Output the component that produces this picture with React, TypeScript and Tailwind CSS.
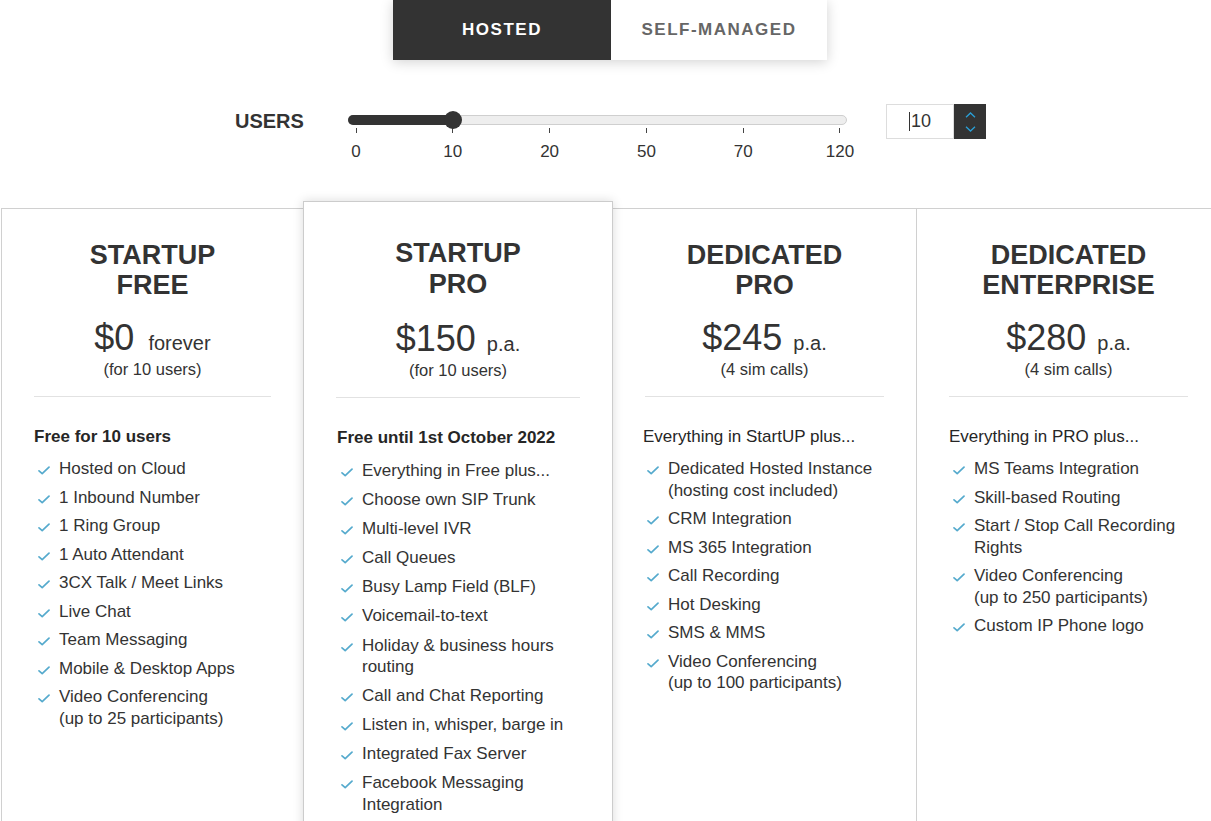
import React, { useState } from "react";

type Plan = {
  title: [string, string];
  price: string;
  unit: string;
  sub: string;
  heading: string;
  headingBold: boolean;
  features: string[][];
};

const plans: Plan[] = [
  {
    title: ["STARTUP", "FREE"],
    price: "$0",
    unit: "forever",
    sub: "(for 10 users)",
    heading: "Free for 10 users",
    headingBold: true,
    features: [
      ["Hosted on Cloud"],
      ["1 Inbound Number"],
      ["1 Ring Group"],
      ["1 Auto Attendant"],
      ["3CX Talk / Meet Links"],
      ["Live Chat"],
      ["Team Messaging"],
      ["Mobile & Desktop Apps"],
      ["Video Conferencing", "(up to 25 participants)"],
    ],
  },
  {
    title: ["STARTUP", "PRO"],
    price: "$150",
    unit: "p.a.",
    sub: "(for 10 users)",
    heading: "Free until 1st October 2022",
    headingBold: true,
    features: [
      ["Everything in Free plus..."],
      ["Choose own SIP Trunk"],
      ["Multi-level IVR"],
      ["Call Queues"],
      ["Busy Lamp Field (BLF)"],
      ["Voicemail-to-text"],
      ["Holiday & business hours", "routing"],
      ["Call and Chat Reporting"],
      ["Listen in, whisper, barge in"],
      ["Integrated Fax Server"],
      ["Facebook Messaging", "Integration"],
    ],
  },
  {
    title: ["DEDICATED", "PRO"],
    price: "$245",
    unit: "p.a.",
    sub: "(4 sim calls)",
    heading: "Everything in StartUP plus...",
    headingBold: false,
    features: [
      ["Dedicated Hosted Instance", "(hosting cost included)"],
      ["CRM Integration"],
      ["MS 365 Integration"],
      ["Call Recording"],
      ["Hot Desking"],
      ["SMS & MMS"],
      ["Video Conferencing", "(up to 100 participants)"],
    ],
  },
  {
    title: ["DEDICATED", "ENTERPRISE"],
    price: "$280",
    unit: "p.a.",
    sub: "(4 sim calls)",
    heading: "Everything in PRO plus...",
    headingBold: false,
    features: [
      ["MS Teams Integration"],
      ["Skill-based Routing"],
      ["Start / Stop Call Recording", "Rights"],
      ["Video Conferencing", "(up to 250 participants)"],
      ["Custom IP Phone logo"],
    ],
  },
];

const ticks = ["0", "10", "20", "50", "70", "120"];

function CheckMark() {
  return (
    <svg
      width="12"
      height="9"
      viewBox="0 0 12 9"
      className="mt-[8px] shrink-0"
      fill="none"
    >
      <path
        d="M1 4.8 L4.2 7.6 L11 1.2"
        stroke="#55aacd"
        strokeWidth="1.7"
        strokeLinecap="round"
        strokeLinejoin="round"
      />
    </svg>
  );
}

function PlanCard({
  plan,
  featured,
  pad = "px-[32px]",
}: {
  plan: Plan;
  featured?: boolean;
  pad?: string;
}) {
  return (
    <div className={featured ? "pt-[36px]" : "pt-[31px]"}>
      <h3
        className={`text-center text-[27px] font-bold text-[#333] ${
          featured ? "leading-[31px]" : "leading-[30px]"
        }`}
      >
        {plan.title[0]}
        <br />
        {plan.title[1]}
      </h3>
      <div
        className={`text-center leading-[40px] text-[#333] ${
          featured ? "mt-[19px]" : "mt-[18px]"
        }`}
      >
        <span className="text-[36px]">{plan.price}</span>
        <span className={`text-[20px] ${plan.unit === "forever" ? "ml-[14px]" : "ml-[11px]"}`}>
          {plan.unit}
        </span>
      </div>
      <div className="-mt-[6px] text-center text-[16.5px] leading-[20px] text-[#333]">
        {plan.sub}
      </div>
      <div className="mx-[32px] mt-[17px] h-px bg-[#e2e2e2]" />
      <div className={`pt-[29px] ${featured ? "px-[33px]" : pad}`}>
        <div
          className={`text-[17px] leading-[22px] text-[#262626] ${
            plan.headingBold ? "font-bold" : ""
          }`}
        >
          {plan.heading}
        </div>
        <ul
          className={`flex flex-col pl-[4px] ${
            featured ? "mt-[11px] gap-[7.6px]" : "mt-[10px] gap-[7px]"
          }`}
        >
          {plan.features.map((f) => (
            <li key={f[0]} className="flex gap-[9px]">
              <CheckMark />
              <span className="text-[17px] leading-[21.5px] text-[#333]">
                {f[0]}
                {f[1] && (
                  <>
                    <br />
                    {f[1]}
                  </>
                )}
              </span>
            </li>
          ))}
        </ul>
      </div>
    </div>
  );
}

export default function App() {
  const [tab, setTab] = useState("hosted");

  return (
    <div
      className="h-[821px] w-[1211px] overflow-hidden bg-white"
      style={{ fontFamily: '"Liberation Sans", Arial, sans-serif' }}
    >
      <div className="w-[1220px]">
        {/* Tabs */}
        <div className="flex justify-center">
          <div className="flex shadow-[0_2px_12px_rgba(0,0,0,0.18)]">
            <button
              onClick={() => setTab("hosted")}
              className={`h-[60px] w-[218px] text-[17px] font-bold tracking-[1.5px] ${
                tab === "hosted" ? "bg-[#333] text-white" : "bg-white text-[#666]"
              }`}
            >
              HOSTED
            </button>
            <button
              onClick={() => setTab("self")}
              className={`h-[60px] w-[216px] text-[17px] font-bold tracking-[1.5px] ${
                tab === "self" ? "bg-[#333] text-white" : "bg-white text-[#666]"
              }`}
            >
              SELF-MANAGED
            </button>
          </div>
        </div>

        {/* Users slider */}
        <div className="mt-[44px] flex h-[60px] justify-center pl-px">
          <div className="mt-[2px] w-[113px] text-[20px] font-bold leading-[30px] text-[#333]">
            USERS
          </div>
          <div className="mt-[11px] w-[499px]">
            <div className="relative h-[10px] rounded-full border border-[#cfcfcf] bg-[#eee]">
              <div className="absolute -left-px -top-px h-[10px] w-[106px] rounded-full bg-[#333]" />
              <div className="absolute left-[95px] top-[-5px] h-[18px] w-[18px] rounded-full bg-[#333]" />
            </div>
            <div className="mt-[3px] flex justify-between pl-[8px] pr-[7px]">
              {ticks.map((t) => (
                <div key={t} className="flex w-0 flex-col items-center">
                  <div className="h-[5px] w-px bg-[#444]" />
                  <div className="mt-[9px] text-[17px] leading-[20px] text-[#333]">
                    {t}
                  </div>
                </div>
              ))}
            </div>
          </div>
          <div className="ml-[39px] flex h-[35px]">
            <div className="flex w-[68px] items-center justify-center border border-[#ddd] text-[18px] text-[#333]">
              <span className="mr-px inline-block h-[19px] w-px bg-[#333]" />
              10
            </div>
            <div className="flex w-[32px] flex-col items-center justify-center gap-[8px] bg-[#333]">
              <svg width="11" height="6" viewBox="0 0 11 6" fill="none">
                <path d="M1 5.2 L5.5 1 L10 5.2" stroke="#2a9fd6" strokeWidth="1.3" />
              </svg>
              <svg width="11" height="6" viewBox="0 0 11 6" fill="none">
                <path d="M1 0.8 L5.5 5 L10 0.8" stroke="#2a9fd6" strokeWidth="1.3" />
              </svg>
            </div>
          </div>
        </div>

        {/* Plans */}
        <div className="mt-[44px] flex items-start">
          <div className="ml-px min-h-[640px] w-[302px] border-l border-t border-[#d0d0d0]">
            <PlanCard plan={plans[0]} />
          </div>
          <div className="relative z-10 -mt-[7px] min-h-[660px] w-[310px] border border-[#ccc] bg-white shadow-[0_0_10px_rgba(0,0,0,0.15)]">
            <PlanCard plan={plans[1]} featured />
          </div>
          <div className="min-h-[640px] w-[303px] border-t border-[#d0d0d0]">
            <PlanCard plan={plans[2]} pad="pl-[30px] pr-[32px]" />
          </div>
          <div className="min-h-[640px] w-[304px] border-l border-t border-[#d0d0d0]">
            <PlanCard plan={plans[3]} />
          </div>
        </div>
      </div>
    </div>
  );
}
